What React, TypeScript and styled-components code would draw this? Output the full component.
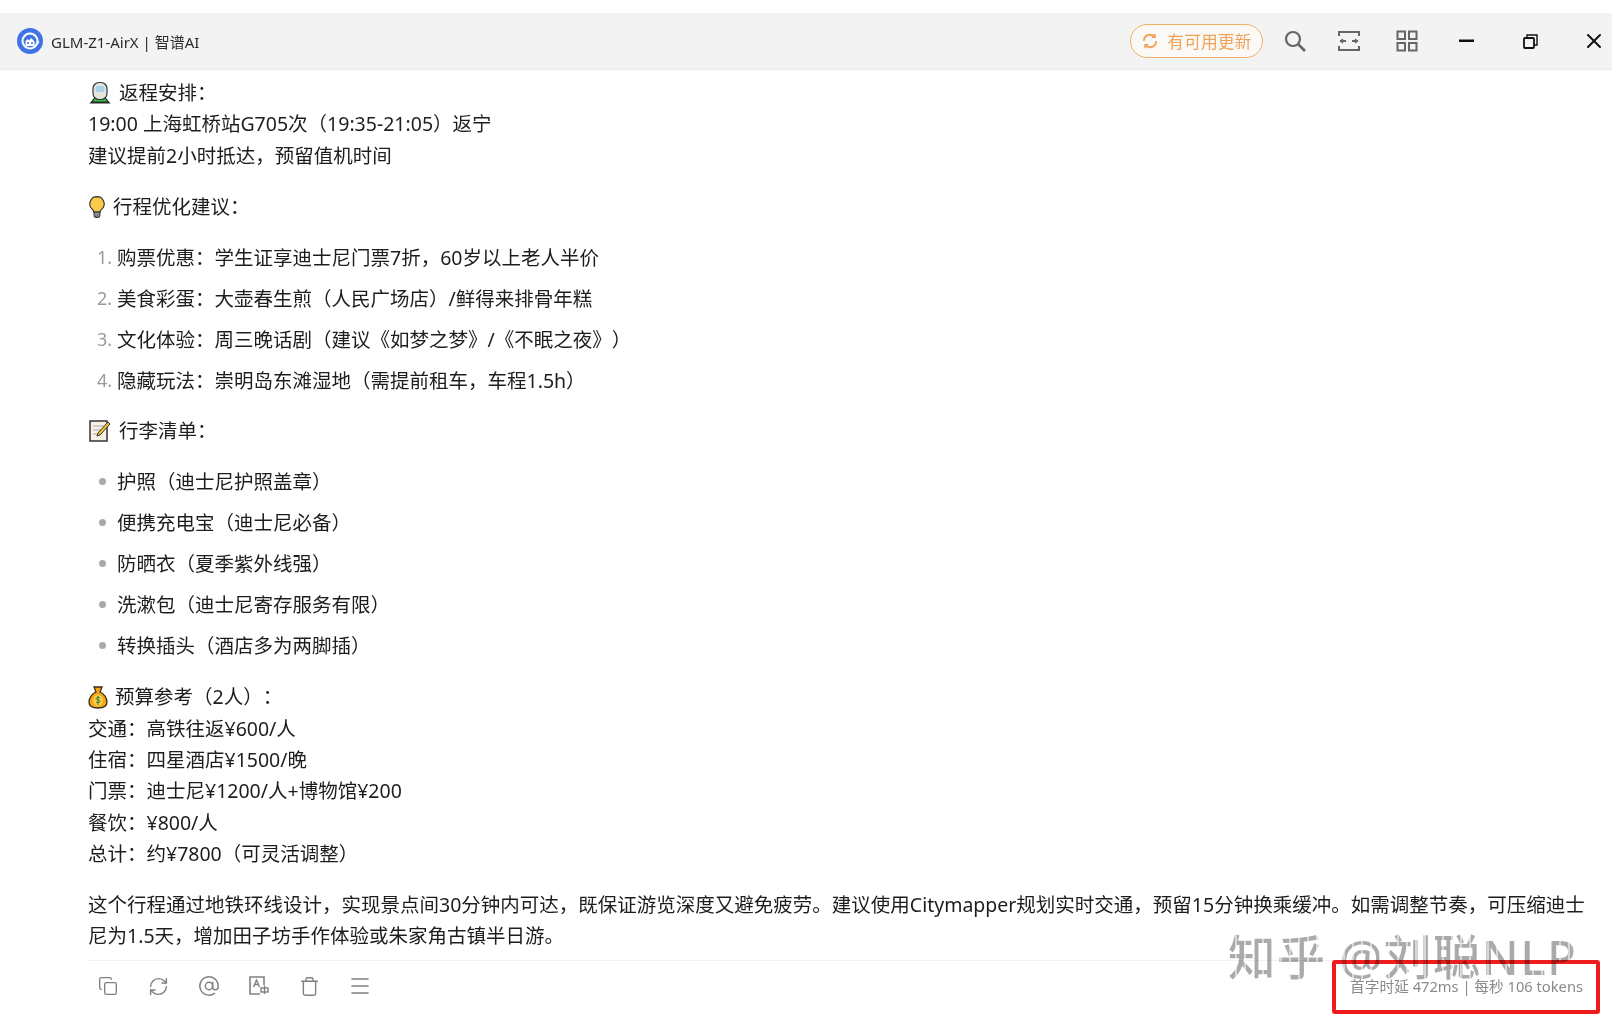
import React from 'react';
import styled, { createGlobalStyle } from 'styled-components';
import { AtSign, Copy, Menu, RefreshCw, Trash, X } from 'lucide-react';

const FONT = '"Noto Sans", "Noto Sans CJK SC", sans-serif';

const GlobalStyle = createGlobalStyle`
  html, body {
    margin: 0;
    padding: 0;
    background: #fff;
    overflow: hidden;
  }
  body {
    font-family: ${FONT};
    text-spacing-trim: space-all;
  }
`;

const Page = styled.div`
  position: relative;
  width: 1612px;
  height: 1024px;
  padding-top: 13px;
  box-sizing: border-box;
  overflow: hidden;
  background: #fff;
`;

const TitleBar = styled.header`
  height: 57px;
  box-sizing: border-box;
  display: flex;
  align-items: center;
  padding-left: 17px;
  background: #f3f3f3;
  border-bottom: 1px solid #ececec;
`;

const AppName = styled.span`
  margin-left: 8px;
  font-size: 15px;
  color: #2c2c2c;
`;

const TitleActions = styled.div`
  margin-left: auto;
  display: flex;
  align-items: center;
`;

const UpdateButton = styled.div`
  width: 133px;
  height: 34px;
  box-sizing: border-box;
  display: flex;
  align-items: center;
  justify-content: center;
  gap: 8px;
  border: 1px solid #efb069;
  border-radius: 17px;
  background: #fbf9f6;
  color: #eda35a;
  font-size: 16.8px;
`;

const BarIcon = styled.div<{ $gap: number; $color?: string }>`
  width: 36px;
  margin-left: ${(p) => p.$gap}px;
  display: flex;
  align-items: center;
  justify-content: center;
  color: ${(p) => p.$color ?? '#666'};
`;

const Content = styled.main`
  padding: 7px 24px 0 88px;
  color: #1d1d1d;
  font-size: 19.5px;
  line-height: 31.3px;
`;

const Block = styled.p<{ $leading?: number }>`
  margin: 0 0 20px;
  ${(p) => (p.$leading ? `line-height: ${p.$leading}px;` : '')}
`;

const Heading = styled.div`
  display: flex;
  align-items: center;
  gap: 7px;
`;

const List = styled.ol<{ $after: number }>`
  margin: 0 0 ${(p) => p.$after}px;
  padding: 0;
  list-style: none;
`;

const Item = styled.li`
  display: flex;
  align-items: center;
  height: 31px;
  margin-bottom: 10px;
  &:last-child {
    margin-bottom: 0;
  }
`;

const Marker = styled.span`
  width: 29px;
  padding-right: 5px;
  box-sizing: border-box;
  flex: none;
  text-align: right;
  color: #9a9a9a;
  font-size: 18px;
`;

const Dot = styled.i`
  width: 7px;
  height: 7px;
  margin: 0 11px 0 11px;
  flex: none;
  border-radius: 50%;
  background: #a9a9a9;
`;

const Footer = styled.footer`
  margin: -11px 4px 0 0;
  height: 50px;
  display: flex;
  align-items: center;
  border-top: 1px solid #f1f1f1;
  color: #808080;
`;

const ToolIcon = styled.div`
  width: 24px;
  margin-left: 8px;
  margin-right: 18.4px;
  display: flex;
  justify-content: center;
`;

const Stats = styled.span`
  margin-left: auto;
  margin-right: 1px;
  font-size: 14.7px;
  color: #8a8a8a;
  white-space: nowrap;
`;

const Highlight = styled.div`
  position: absolute;
  left: 1332px;
  top: 960px;
  width: 268px;
  height: 54px;
  box-sizing: border-box;
  border: 4px solid #ee1c1c;
  border-radius: 3px;
`;

const Watermark = styled.div`
  position: absolute;
  left: 1228px;
  top: 925px;
  font-size: 48px;
  font-weight: 500;
  line-height: 64px;
  letter-spacing: 1px;
  white-space: nowrap;
  background: repeating-linear-gradient(90deg, #aaa 0 7px, #d8d8d8 7px 9px);
  -webkit-background-clip: text;
  background-clip: text;
  -webkit-text-fill-color: transparent;
  mix-blend-mode: multiply;
`;

const Logo = () => (
  <svg width="26" height="26" viewBox="0 0 26 26">
    <circle cx="13" cy="13" r="13" fill="#3f73e6" />
    <circle cx="13" cy="13" r="7.5" fill="none" stroke="#fff" strokeWidth="2" />
    <path d="M8.5 18v-5l2.2-2 1.5 1.500 2-2.500 3.300 3.500V18z" fill="#fff" />
    <circle cx="11" cy="15" r="1" fill="#3f73e6" />
    <circle cx="15" cy="15" r="1" fill="#3f73e6" />
    <path d="M19 17l3-3.500" stroke="#fff" strokeWidth="1.500" />
  </svg>
);

const UpdateIcon = () => (
  <svg width="18" height="18" viewBox="0 0 18 18" fill="none" stroke="currentColor" strokeWidth="2" strokeLinecap="round">
    <path d="M3 8a6 6 0 0 1 10.500-3.200" />
    <path d="M15 10a6 6 0 0 1-10.500 3.200" />
    <path d="M13.800 2.500v2.600h-2.500M4.200 15.500v-2.600h2.500" strokeWidth="1.600" />
  </svg>
);

const SearchIcon = () => (
  <svg width="22" height="22" viewBox="0 0 22 22" fill="none" stroke="currentColor" strokeWidth="2.200">
    <circle cx="9" cy="9" r="7" />
    <path d="M14 14l7 7" strokeWidth="2.600" />
  </svg>
);

const ScanIcon = () => (
  <svg width="24" height="22" viewBox="0 0 24 22" fill="none" stroke="currentColor" strokeWidth="2">
    <path d="M2 6V2h20v4M2 16v4h20v-4" />
    <path d="M3 11h6M15 11h6" />
    <path d="M6 9l-2.500 2L6 13M18 9l2.500 2L18 13" strokeWidth="1.300" />
  </svg>
);

const GridIcon = () => (
  <svg width="22" height="22" viewBox="0 0 22 22" fill="none" stroke="currentColor" strokeWidth="2">
    <rect x="1.500" y="1.500" width="7.500" height="7.500" />
    <rect x="13" y="1.500" width="7.500" height="7.500" />
    <rect x="1.500" y="13" width="7.500" height="7.500" />
    <rect x="13" y="13" width="7.500" height="7.500" />
  </svg>
);

const MinimizeIcon = () => (
  <svg width="16" height="4" viewBox="0 0 16 4">
    <rect y="0.500" width="15" height="2.500" fill="#111" />
  </svg>
);

const RestoreIcon = () => (
  <svg width="15" height="15" viewBox="0 0 15 15" fill="none" stroke="#111" strokeWidth="1.800">
    <rect x="1" y="4" width="10" height="10" rx="1" />
    <path d="M4 3.800V1h10v10h-2.800" strokeWidth="1.400" />
  </svg>
);

const TranslateIcon = () => (
  <svg width="22" height="20" viewBox="0 0 22 20" fill="none" stroke="currentColor" strokeWidth="1.600">
    <path d="M16 9V1H2v17h10" />
    <path d="M5.500 11l3-7 3 7M6.800 8.500h3.400" strokeWidth="1.400" />
    <rect x="13" y="12" width="7" height="4" strokeWidth="1.400" />
    <path d="M16.500 9.500v8.500" strokeWidth="1.400" />
  </svg>
);

const TrainEmoji = () => (
  <svg width="24" height="24" viewBox="0 0 24 24">
    <path d="M1.500 22.500L6 17h12l4.500 5.500z" fill="#2a2a2a" />
    <path d="M5 20.500l2.500-4h9l2.500 4z" fill="#35c23e" />
    <rect x="5" y="1.500" width="14" height="17" rx="6" fill="#dfe6e6" stroke="#333" strokeWidth="1.200" />
    <rect x="7.500" y="5" width="9" height="6" rx="2" fill="#a9d3ea" />
    <circle cx="8.500" cy="14.500" r="1" fill="#ffe27a" />
    <circle cx="15.500" cy="14.500" r="1" fill="#ffe27a" />
  </svg>
);

const BulbEmoji = () => (
  <svg width="18" height="24" viewBox="0 0 20 26">
    <path d="M10 1.500a8 8 0 0 0-5 14.200c1 .9 1.500 2 1.500 3h7c0-1 .5-2.100 1.500-3a8 8 0 0 0-5-14.200z" fill="#fdc94d" stroke="#333" strokeWidth="1.300" />
    <path d="M6.800 18.500h6.400v4a2 2 0 0 1-2 2H8.800a2 2 0 0 1-2-2z" fill="#8c8c8c" stroke="#333" strokeWidth="1.200" />
  </svg>
);

const MemoEmoji = () => (
  <svg width="24" height="24" viewBox="0 0 24 24">
    <rect x="2" y="2" width="17" height="20" fill="#f6f1e2" stroke="#333" strokeWidth="1.500" />
    <path d="M5 7h11M5 11h9M5 15h5" stroke="#aaa" strokeWidth="1.200" />
    <path d="M9 17l1-3L20 3l2 2L12 16z" fill="#f2c230" stroke="#333" strokeWidth="1" />
  </svg>
);

const MoneyEmoji = () => (
  <svg width="20" height="24" viewBox="0 0 20 24">
    <path d="M6 2h8l-2 5c4 1.500 7 6 7 10 0 4-3 6-9 6s-9-2-9-6c0-4 3-8.500 7-10z" fill="#f4a81e" stroke="#3a2a10" strokeWidth="1.300" />
    <ellipse cx="10" cy="15.500" rx="4.800" ry="5.800" fill="#f9cf4a" />
    <path d="M12 13c-.5-1-3.500-1.300-3.800.3-.3 1.800 3.800 1.200 3.800 3.100 0 1.500-3 1.500-4 .4M10 11v9" fill="none" stroke="#2e7d32" strokeWidth="1" />
  </svg>
);

const orderedItems = [
  '购票优惠：学生证享迪士尼门票7折，60岁以上老人半价',
  '美食彩蛋：大壶春生煎（人民广场店）/鲜得来排骨年糕',
  '文化体验：周三晚话剧（建议《如梦之梦》/《不眠之夜》）',
  '隐藏玩法：崇明岛东滩湿地（需提前租车，车程1.5h）',
];

const packingItems = [
  '护照（迪士尼护照盖章）',
  '便携充电宝（迪士尼必备）',
  '防晒衣（夏季紫外线强）',
  '洗漱包（迪士尼寄存服务有限）',
  '转换插头（酒店多为两脚插）',
];

const App = () => {
  return (
    <Page>
      <GlobalStyle />
      <TitleBar>
        <Logo />
        <AppName>GLM-Z1-AirX | 智谱AI</AppName>
        <TitleActions>
          <UpdateButton>
            <UpdateIcon />
            有可用更新
          </UpdateButton>
          <BarIcon $gap={14}>
            <SearchIcon />
          </BarIcon>
          <BarIcon $gap={18.5}>
            <ScanIcon />
          </BarIcon>
          <BarIcon $gap={21.5}>
            <GridIcon />
          </BarIcon>
          <BarIcon $gap={23.7}>
            <MinimizeIcon />
          </BarIcon>
          <BarIcon $gap={27.7}>
            <RestoreIcon />
          </BarIcon>
          <BarIcon $gap={27.8} $color="#111">
            <X size={24} strokeWidth={2} />
          </BarIcon>
        </TitleActions>
      </TitleBar>
      <Content>
        <Block>
          <Heading>
            <TrainEmoji /> 返程安排：
          </Heading>
          19:00 上海虹桥站G705次（19:35-21:05）返宁
          <br />
          建议提前2小时抵达，预留值机时间
        </Block>
        <Block>
          <Heading>
            <BulbEmoji /> 行程优化建议：
          </Heading>
        </Block>
        <List $after={19}>
          {orderedItems.map((text, i) => (
            <Item key={text}>
              <Marker>{i + 1}.</Marker>
              {text}
            </Item>
          ))}
        </List>
        <Block>
          <Heading>
            <MemoEmoji /> 行李清单：
          </Heading>
        </Block>
        <List as="ul" $after={20}>
          {packingItems.map((text) => (
            <Item key={text}>
              <Dot />
              {text}
            </Item>
          ))}
        </List>
        <Block>
          <Heading>
            <MoneyEmoji /> 预算参考（2人）：
          </Heading>
          交通：高铁往返¥600/人
          <br />
          住宿：四星酒店¥1500/晚
          <br />
          门票：迪士尼¥1200/人+博物馆¥200
          <br />
          餐饮：¥800/人
          <br />
          总计：约¥7800（可灵活调整）
        </Block>
        <Block $leading={31}>
          这个行程通过地铁环线设计，实现景点间30分钟内可达，既保证游览深度又避免疲劳。建议使用Citymapper规划实时交通，预留15分钟换乘缓冲。如需调整节奏，可压缩迪士尼为1.5天，增加田子坊手作体验或朱家角古镇半日游。
        </Block>
        <Footer>
          <ToolIcon>
            <Copy size={20} strokeWidth={1.600} />
          </ToolIcon>
          <ToolIcon>
            <RefreshCw size={21} strokeWidth={1.600} />
          </ToolIcon>
          <ToolIcon>
            <AtSign size={22} strokeWidth={1.600} />
          </ToolIcon>
          <ToolIcon>
            <TranslateIcon />
          </ToolIcon>
          <ToolIcon>
            <Trash size={21} strokeWidth={1.600} />
          </ToolIcon>
          <ToolIcon>
            <Menu size={24} strokeWidth={1.600} />
          </ToolIcon>
          <Stats>首字时延 472ms | 每秒 106 tokens</Stats>
        </Footer>
      </Content>
      <Highlight />
      <Watermark>知乎 @刘聪NLP</Watermark>
    </Page>
  );
};

export default App;
